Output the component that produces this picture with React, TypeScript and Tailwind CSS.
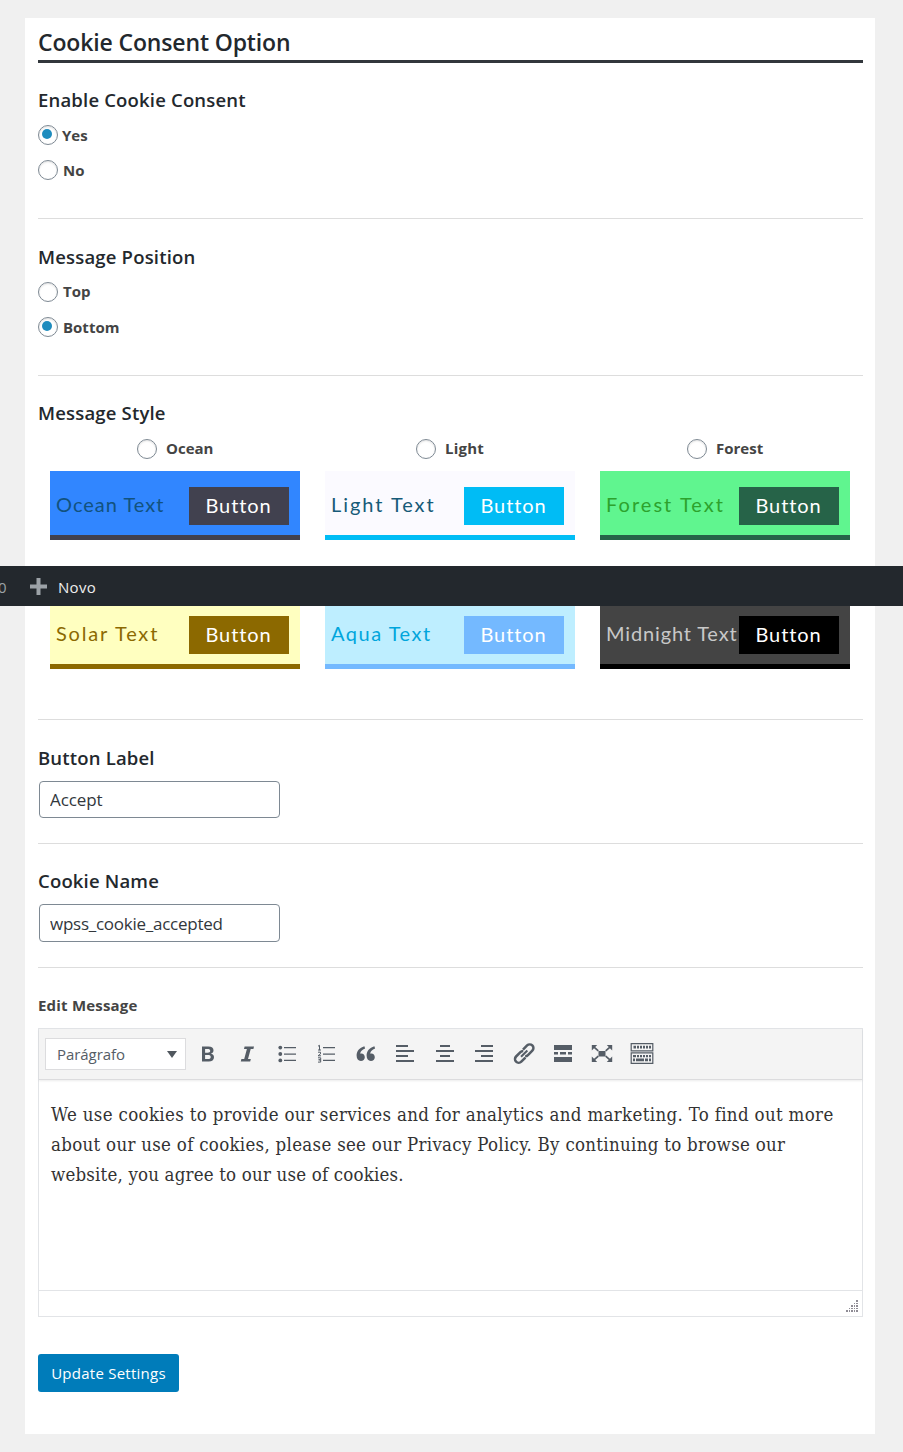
import React from "react";

const sans = "font-['Open_Sans','Noto_Sans',sans-serif]";

function Heading({ children }: { children: React.ReactNode }) {
  return <h3 className="h-6 whitespace-nowrap text-[18.5px] font-semibold leading-6 tracking-[0.18px] text-[#23282d]">{children}</h3>;
}

function Dot({ on = false }: { on?: boolean }) {
  return (
    <span className="flex h-5 w-5 shrink-0 items-center justify-center rounded-full border border-[#7e8993] bg-white pb-0.5 pr-0.5 shadow-[inset_0_1px_2px_rgba(0,0,0,0.12)]">
      {on && <span className="h-2.5 w-2.5 rounded-full bg-[#1e8cbe]" />}
    </span>
  );
}

function Radio({ label, on, className, textClass = "" }: { label: string; on?: boolean; className: string; textClass?: string }) {
  return (
    <label className={`flex h-5 items-center text-[15px] font-bold leading-5 text-[#444] ${className}`}>
      <Dot on={on} />
      <span className={textClass}>{label}</span>
    </label>
  );
}

type StyleProps = { text: string; box: string; ink: string; button: string; track: string };

function Preview({ text, box, ink, button, track }: StyleProps) {
  return (
    <div className={`flex h-[69px] w-[250px] items-start justify-between border-b-[5px] pl-1.5 pr-[11px] pt-4 font-['Lato',sans-serif] ${box}`}>
      <span className={`w-[133px] whitespace-nowrap text-[20px] leading-[34px] ${track} ${ink}`}>{text}</span>
      <span className={`flex h-[38px] w-[100px] shrink-0 items-center justify-center pb-0.5 pr-px text-[20px] tracking-[0.9px] text-white ${button}`}>Button</span>
    </div>
  );
}

function Icon({ children }: { children: React.ReactNode }) {
  return (
    <svg width="24" height="24" viewBox="0 0 24 24" fill="#555d66" className="shrink-0">
      {children}
    </svg>
  );
}

function Toolbar() {
  return (
    <div className="flex h-[51px] items-center border-b border-[#dcdcde] bg-[#f4f4f4] pl-1.5 shadow-[0_1px_2px_rgba(0,0,0,0.08)]">
      <div className="flex h-8 w-[141px] items-center justify-between border border-[#dcdcde] bg-white pl-[11px] pr-2 text-[15px] tracking-[-0.05px] text-[#555d66]">
        <span>Parágrafo</span>
        <svg width="10" height="7" viewBox="0 0 10 7" fill="#50575e"><path d="M0 0h10L5 7z" /></svg>
      </div>
      <div className="ml-[10px] flex gap-[15.45px]">
        <Icon><path fillRule="evenodd" d="M6 4.500h6.300c3.600 0 5.200 1.300 5.200 3.800 0 1.700-.9 2.900-2.300 3.300v.1c1.900.4 2.800 1.600 2.800 3.500 0 2.800-2 4.300-5.300 4.300H6zM9.100 7v3.700h2.500c1.700 0 2.600-.5 2.600-1.900 0-1.300-.9-1.800-2.700-1.800zm0 6v4h2.900c1.800 0 2.700-.7 2.700-2.100 0-1.300-.9-1.900-2.800-1.900z" /></Icon>
        <Icon><path d="M9.600 4.500H19l-.6 2.500h-2.700L13 17h2.800l-.6 2.500H5.800l.6-2.500h2.800l2.700-10H9z" /></Icon>
        <Icon>
          <circle cx="5.300" cy="5.600" r="1.900" /><circle cx="5.300" cy="12" r="1.900" /><circle cx="5.300" cy="18.400" r="1.900" />
          <path d="M9 5h12v1.300H9zM9 11.400h12v1.300H9zM9 17.800h12v1.300H9z" />
        </Icon>
        <Icon>
          <path d="M9 5h12v1.300H9zM9 11.400h12v1.300H9zM9 17.800h12v1.300H9z" />
          <path fill="none" stroke="#555d66" strokeWidth="1" d="M4 4.200l1.500-.9v4.900M4 8h3M4 10.200h2.500v1.700L4 13.800h3M4 15.800h2.700v2H4.600h2.100v2.300H4" />
        </Icon>
        <Icon>
          <path d="M10.400 4.200C5.400 5.700 2.600 9 2.600 13.600c0 3.400 1.600 5.500 4.300 5.500 2.200 0 3.900-1.600 3.900-3.900 0-2.200-1.400-3.700-3.500-3.700-.4 0-.8.1-1.100.2.2-2.300 1.900-4.100 4.900-5.200zM20.400 4.200c-5 1.500-7.800 4.800-7.800 9.400 0 3.400 1.600 5.500 4.300 5.500 2.200 0 3.900-1.600 3.900-3.900 0-2.200-1.400-3.700-3.500-3.700-.4 0-.8.1-1.100.2.2-2.300 1.900-4.100 4.900-5.200z" />
        </Icon>
        <Icon><path d="M3 3h12v2H3zM3 8h18v2H3zM3 13h12v2H3zM3 18h18v2H3z" /></Icon>
        <Icon><path d="M7 3h10v2H7zM3 8h18v2H3zM7 13h10v2H7zM3 18h18v2H3z" /></Icon>
        <Icon><path d="M9 3h12v2H9zM3 8h18v2H3zM9 13h12v2H9zM3 18h18v2H3z" /></Icon>
        <Icon>
          <g fill="none" stroke="#555d66" strokeWidth="2.500" transform="translate(12.200 11.600) rotate(-45)">
            <path d="M2-3.700h5.800a3.700 3.700 0 0 1 0 7.400H1.600a3.700 3.700 0 0 1-2.800-1.200" />
            <path d="M-2 3.700h-5.800a3.700 3.700 0 0 1 0-7.400h6.200a3.700 3.700 0 0 1 2.800 1.200" />
            <path strokeWidth="2" d="M-4.500 0h9" />
          </g>
        </Icon>
        <Icon><path d="M3 3h18v5H3zM3 10h4v2.600H3zM9 10h6v2.600H9zM17 10h4v2.600h-4zM3 15h18v5H3z" /></Icon>
        <Icon>
          <path d="M8.500 9h7v5.500h-7z" />
          <path d="M1.800 3h5.400L1.800 8.400zM22.200 3h-5.400l5.400 5.400zM1.800 20h5.400l-5.400-5.400zM22.200 20h-5.400l5.400-5.400z" />
          <path fill="none" stroke="#555d66" strokeWidth="1.700" d="M3.500 4.700L8.300 8.900M20.500 4.700l-4.800 4.200M3.500 18.300l4.800-4.200M20.500 18.300l-4.800-4.200" />
        </Icon>
        <Icon>
          <path fill="none" stroke="#555d66" strokeWidth="1.200" d="M1.200 1.700h21.600v7.200H1.200zM1.200 10.800h21.600v10.600H1.200z" />
          <path d="M3.500 3.800H6v2.800H3.500zM7 3.800h2v2.800H7zM10 3.800h2v2.800h-2zM13 3.800h2v2.800h-2zM16 3.800h2v2.800h-2zM19 3.800h2v2.800h-2zM3 13h3v2.300H3zM7 13h2v2.300H7zM10 13h2v2.300h-2zM13 13h2v2.300h-2zM16 13h2v2.300h-2zM19 13h2v2.300h-2zM3 16.500h2v2.700H3zM6 16.500h8v2.700H6zM15 16.500h3v2.700h-3zM19 16.500h2v2.700h-2z" />
        </Icon>
      </div>
    </div>
  );
}

export default function App() {
  return (
    <div className={`relative h-[1452px] w-[903px] overflow-hidden bg-[#f0f0f0] pl-[25px] pt-[18px] pr-[28px] ${sans}`}>
      <main className="h-[1416px] w-[850px] bg-white pl-[13px] pr-3">
        <h1 className="h-[45px] whitespace-nowrap border-b-[3px] border-[#32373c] pt-[8px] text-[23px] font-semibold leading-8 tracking-[-0.14px] text-[#23282d]">Cookie Consent Option</h1>

        <section className="h-[156px] border-b border-[#ddd] pt-[25px]">
          <Heading>Enable Cookie Consent</Heading>
          <Radio label="Yes" on className="mt-[13px] gap-1" />
          <Radio label="No" className="mt-[15px] gap-[5px]" />
        </section>

        <section className="h-[157px] border-b border-[#ddd] pt-[26px]">
          <Heading>Message Position</Heading>
          <Radio label="Top" className="mt-[13px] gap-[5px]" textClass="pb-0.5" />
          <Radio label="Bottom" on className="mt-[15px] gap-[5px]" />
        </section>

        <section className="h-[344px] border-b border-[#ddd] pt-[25px]">
          <Heading>Message Style</Heading>
          <div className="mt-[14px] grid grid-cols-[275px_275px_275px]">
            <Radio label="Ocean" className="gap-[9px] pl-[99px]" textClass="pb-0.5" />
            <Radio label="Light" className="gap-[9px] pl-[103px]" textClass="pb-0.5 tracking-[0.2px]" />
            <Radio label="Forest" className="gap-[9px] pl-[99px]" textClass="pb-0.5" />
          </div>
          <div className="mt-3 grid grid-cols-[275px_275px_275px] gap-y-[60px] pl-3">
            <Preview text="Ocean Text" box="bg-[#3186ff] border-[#41414f]" ink="text-[#12527e]" button="bg-[#41414f]" track="tracking-[1px]" />
            <Preview text="Light Text" box="bg-[#fbfaff] border-[#00bcf5]" ink="text-[#165a78]" button="bg-[#00bcf5]" track="tracking-[1.95px]" />
            <Preview text="Forest Text" box="bg-[#60f58f] border-[#266348]" ink="text-[#2da22d]" button="bg-[#266348]" track="tracking-[2.05px]" />
            <Preview text="Solar Text" box="bg-[#ffffc0] border-[#8c6900]" ink="text-[#8c6900]" button="bg-[#8c6900]" track="tracking-[1.8px]" />
            <Preview text="Aqua Text" box="bg-[#beeeff] border-[#74b9ff]" ink="text-[#00a5dc]" button="bg-[#74b9ff]" track="tracking-[1.5px]" />
            <Preview text="Midnight Text" box="bg-[#444] border-black" ink="text-[#c8c8c8]" button="bg-black" track="tracking-[0.85px]" />
          </div>
        </section>

        <section className="h-[124px] border-b border-[#ddd] pt-[26px]">
          <Heading>Button Label</Heading>
          <input readOnly value="Accept" className="ml-px mt-[11px] block h-[37px] w-[241px] rounded-[4px] border border-[#7e8993] bg-white px-[10px] text-[17px] tracking-[-0.1px] text-[#32373c]" />
        </section>

        <section className="h-[124px] border-b border-[#ddd] pt-[25px]">
          <Heading>Cookie Name</Heading>
          <input readOnly value="wpss_cookie_accepted" className="ml-px mt-[11px] block h-[38px] w-[241px] rounded-[4px] border border-[#7e8993] bg-white px-[10px] text-[17px] tracking-[-0.25px] text-[#32373c]" />
        </section>

        <section className="pt-[26px]">
          <h4 className="h-[34px] text-[15px] font-bold leading-[22px] tracking-[0.2px] text-[#444]">Edit Message</h4>
          <div className="h-[289px] border border-[#e2e4e7]">
            <Toolbar />
            <p className="h-[210px] whitespace-nowrap pl-3 pt-5 font-['DejaVu_Serif_Condensed','DejaVu_Serif',serif] text-[18.5px] leading-[30px] text-[#333]">
              <span className="tracking-[0.34px]">We use cookies to provide our services and for analytics and marketing. To find out more</span><br />
              <span className="tracking-[0.3px]">about our use of cookies, please see our Privacy Policy. By continuing to browse our</span><br />
              <span className="tracking-[0.19px]">website, you agree to our use of cookies.</span>
            </p>
            <div className="flex h-[26px] items-end justify-end border-t border-[#e2e4e7] pb-1 pr-1">
              <svg width="12" height="12" viewBox="0 0 12 12" fill="#8f8c95">
                <path d="M10 0h2v2h-2zM8 3h1v1H8zM10 3h2v1h-2zM5 5h2v2H5zM8 5h1v2H8zM10 5h2v2h-2zM3 8h1v1H3zM5 8h2v1H5zM8 8h1v1H8zM10 8h2v1h-2zM0 10h2v2H0zM3 10h1v2H3zM5 10h2v2H5zM8 10h1v2H8zM10 10h2v2h-2z" />
              </svg>
            </div>
          </div>
          <button className="mt-[37px] flex h-[38px] w-[141px] items-center justify-center whitespace-nowrap rounded-[3px] bg-[#007cba] text-[15px] tracking-[0.25px] text-white">Update Settings</button>
        </section>
      </main>

      <div className="absolute left-0 top-[566px] flex h-10 w-[903px] items-center bg-[#23282d] text-[15px] text-[#eee]">
        <span className="-ml-[2px] w-8 pt-0.5 text-[#9ca2a7]">0</span>
        <svg width="17" height="17" viewBox="0 0 17 17" fill="#9ca2a7"><path d="M6.500 0h4v6.500H17v4h-6.500V17h-4v-6.500H0v-4h6.500z" /></svg>
        <span className="ml-[11px] pt-0.5 tracking-[0.3px]">Novo</span>
      </div>
    </div>
  );
}
